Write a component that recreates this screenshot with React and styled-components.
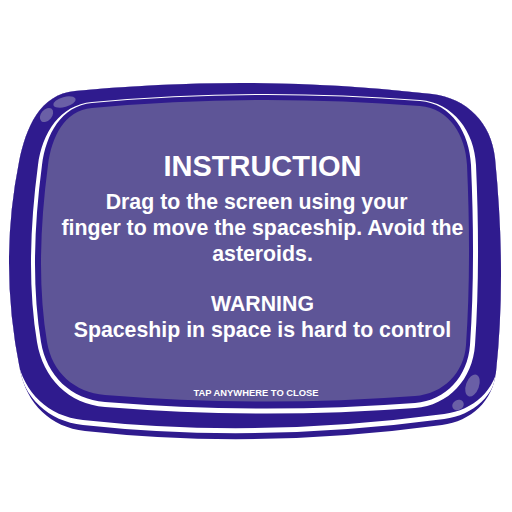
import React from "react";
import styled, { createGlobalStyle } from "styled-components";

const DARK = "#2f1b8e";
const SCREEN = "#5e5597";
const GLOSS = "#6a5fa6";

const GlobalStyle = createGlobalStyle`
  html, body { margin: 0; padding: 0; background: #ffffff; }
  body { font-family: "Liberation Sans", Arial, sans-serif; }
`;

const Stage = styled.div`
  display: grid;
  width: 512px;
  height: 512px;
  overflow: hidden;
  & > * { grid-area: 1 / 1; }
`;

const FrameArt = styled.svg`
  display: block;
  width: 512px;
  height: 512px;
`;

const Content = styled.div`
  display: flex;
  flex-direction: column;
  align-items: center;
  padding-top: 149px;
  color: #ffffff;
  text-align: center;
  font-family: "Liberation Sans", Arial, sans-serif;
  font-weight: 700;
`;

const Message = styled.div`
  display: flex;
  flex-direction: column;
  align-items: center;
  padding-left: 13px;
`;

const Title = styled.h1`
  margin: 0;
  font-size: 29px;
  line-height: 34px;
  font-weight: 700;
`;

const Paragraph = styled.p`
  margin: ${(p) => p.$gap}px 0 0;
  font-size: 21.3px;
  line-height: 26px;
  white-space: nowrap;
`;

const Hint = styled.div`
  margin-top: 43.6px;
  font-size: 9.4px;
  line-height: 11px;
  letter-spacing: 0;
`;

const sub = (a, b) => [a[0] - b[0], a[1] - b[1]];
const add = (a, b) => [a[0] + b[0], a[1] + b[1]];
const mul = (a, k) => [a[0] * k, a[1] * k];
const unit = (v) => {
  const l = Math.hypot(v[0], v[1]) || 1;
  return [v[0] / l, v[1] / l];
};
const ctrl = (p0, m, p2) => [2 * m[0] - (p0[0] + p2[0]) / 2, 2 * m[1] - (p0[1] + p2[1]) / 2];
const f = (p) => `${p[0].toFixed(2)} ${p[1].toFixed(2)}`;

function shapePath(s) {
  const cTop = ctrl(s.tlT, s.top, s.trT);
  const cRight = ctrl(s.trS, s.right, s.brS);
  const cBottom = ctrl(s.brB, s.bottom, s.blB);
  const cLeft = ctrl(s.blS, s.left, s.tlS);
  const corner = (a, ea, b, eb) => {
    const h = Math.hypot(b[0] - a[0], b[1] - a[1]) * 0.39;
    const c1 = add(a, mul(unit(sub(a, ea)), h));
    const c2 = sub(b, mul(unit(sub(eb, b)), h));
    return `C ${f(c1)} ${f(c2)} ${f(b)}`;
  };
  return [
    `M ${f(s.tlT)}`,
    `Q ${f(cTop)} ${f(s.trT)}`,
    corner(s.trT, cTop, s.trS, cRight),
    `Q ${f(cRight)} ${f(s.brS)}`,
    corner(s.brS, cRight, s.brB, cBottom),
    `Q ${f(cBottom)} ${f(s.blB)}`,
    corner(s.blB, cBottom, s.blS, cLeft),
    `Q ${f(cLeft)} ${f(s.tlS)}`,
    corner(s.tlS, cLeft, s.tlT, cTop),
    "Z",
  ].join(" ");
}

function expand(s, t, r, b, l) {
  return {
    tlT: [s.tlT[0], s.tlT[1] - t],
    tlS: [s.tlS[0] - l, s.tlS[1]],
    trT: [s.trT[0], s.trT[1] - t],
    trS: [s.trS[0] + r, s.trS[1]],
    brS: [s.brS[0] + r, s.brS[1]],
    brB: [s.brB[0], s.brB[1] + b],
    blB: [s.blB[0], s.blB[1] + b],
    blS: [s.blS[0] - l, s.blS[1]],
    top: [s.top[0], s.top[1] - t],
    right: [s.right[0] + r, s.right[1]],
    bottom: [s.bottom[0], s.bottom[1] + b],
    left: [s.left[0] - l, s.left[1]],
  };
}

const OUTER = {
  tlT: [75, 91],
  tlS: [19, 162],
  trT: [432, 94],
  trS: [495, 158],
  brS: [496, 372],
  brB: [442, 425],
  blB: [85, 431],
  blS: [20, 370],
  top: [255, 83],
  right: [501, 270],
  bottom: [260, 439],
  left: [9, 265],
};

const SCREEN_SHAPE = {
  tlT: [92, 108],
  tlS: [48, 165],
  trT: [420, 106],
  trS: [467, 165],
  brS: [466, 345],
  brB: [415, 396],
  blB: [105, 395],
  blS: [47, 342],
  top: [255, 100],
  right: [469, 260],
  bottom: [260, 401.5],
  left: [41, 260],
};

const RIM_DARK = expand(SCREEN_SHAPE, 5, 4, 7, 6);
const RIM_LIGHT = expand(RIM_DARK, 1, 5, 5, 4);

const outerD = shapePath(OUTER);
const screenD = shapePath(SCREEN_SHAPE);
const rimDarkD = shapePath(RIM_DARK);
const rimLightD = shapePath(RIM_LIGHT);

const lift = (dy) => `translate(0,${dy}) translate(255,0) scale(1.012,1) translate(-255,0)`;

function Frame() {
  return (
    <FrameArt viewBox="0 0 512 512" aria-hidden="true">
      <defs>
        <clipPath id="outerClip">
          <path d={outerD} />
        </clipPath>
      </defs>
      <path d={outerD} fill={DARK} />
      <g clipPath="url(#outerClip)">
        <path d={outerD} transform={lift(-6)} fill="#ffffff" />
        <path d={outerD} transform={lift(-11)} fill={DARK} />
      </g>
      <path d={rimLightD} fill="#ffffff" />
      <path d={rimDarkD} fill={DARK} />
      <path d={screenD} fill={SCREEN} />
      <ellipse cx="64.5" cy="102" rx="11.5" ry="5" transform="rotate(-15 64.5 102)" fill={GLOSS} />
      <ellipse cx="46.5" cy="115" rx="8" ry="5.5" transform="rotate(-50 46.5 115)" fill={GLOSS} />
      <ellipse cx="472.5" cy="385.5" rx="6.5" ry="11.5" transform="rotate(20 472.5 385.5)" fill={GLOSS} />
      <ellipse cx="458" cy="405" rx="6" ry="5" transform="rotate(-30 458 405)" fill={GLOSS} />
    </FrameArt>
  );
}

export default function App() {
  return (
    <>
      <GlobalStyle />
      <Stage>
        <Frame />
        <Content>
          <Message>
            <Title>INSTRUCTION</Title>
            <Paragraph $gap={5.6}>
              Drag to the screen using your{"\u00a0\u00a0"}
              <br />
              finger to move the spaceship. Avoid the
              <br />
              asteroids.
            </Paragraph>
            <Paragraph $gap={24.7}>
              WARNING
              <br />
              Spaceship in space is hard to control
            </Paragraph>
          </Message>
          <Hint>TAP ANYWHERE TO CLOSE</Hint>
        </Content>
      </Stage>
    </>
  );
}
